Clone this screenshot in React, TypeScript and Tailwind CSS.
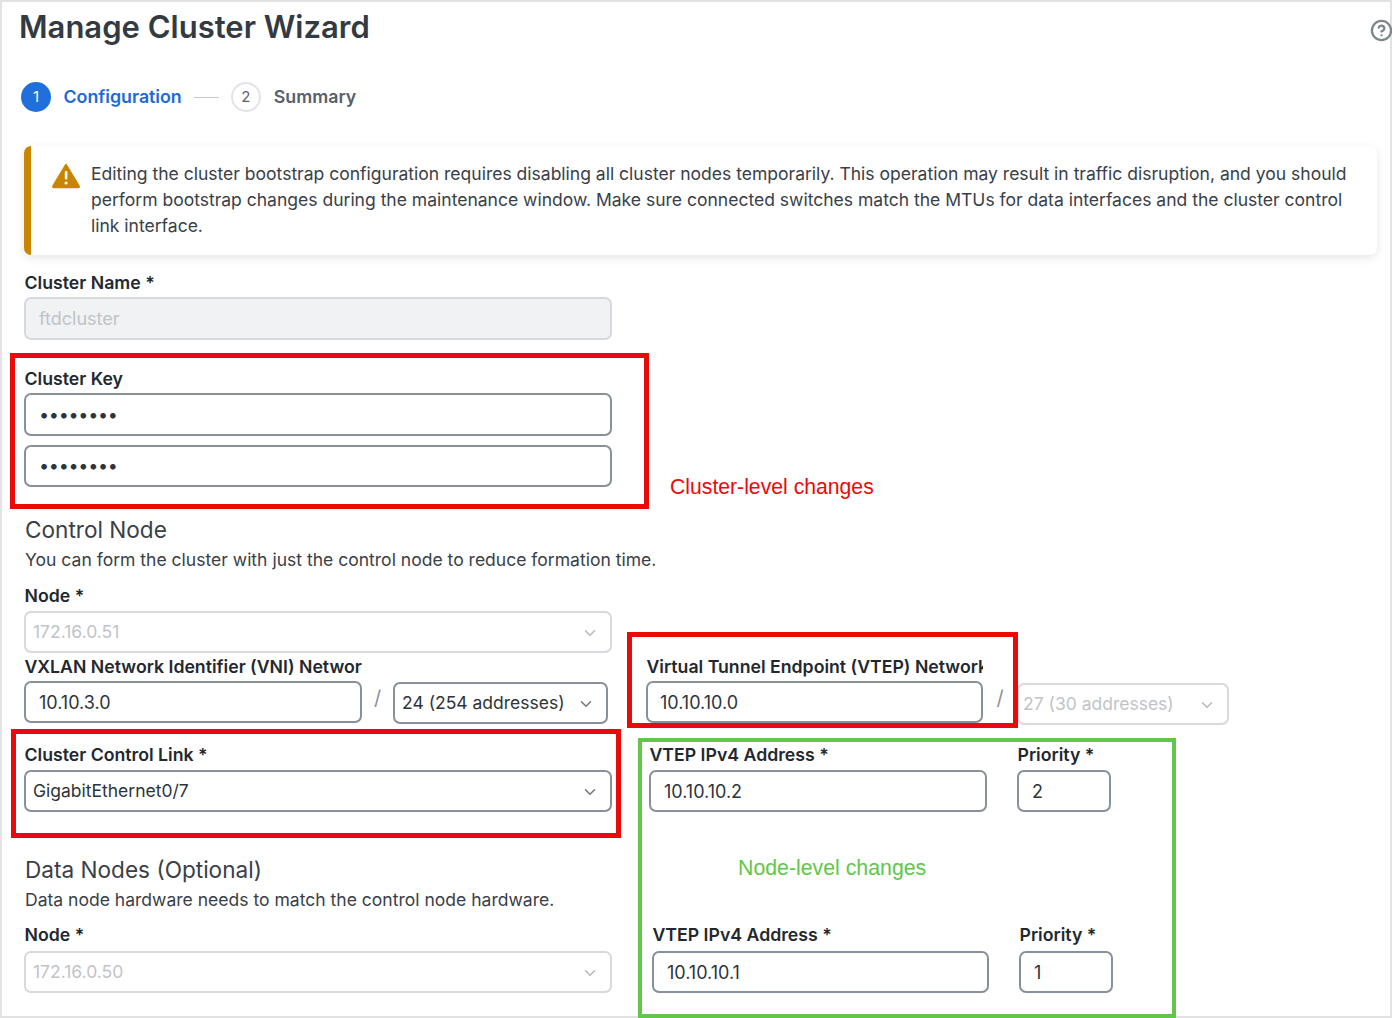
import { ChevronDown, CircleHelp } from "lucide-react";

const font = "font-['Inter',sans-serif]";

function Label({ text, width, className = "" }: { text: string; width?: string; className?: string }) {
  return (
    <div className={`h-[22px] leading-[22px] pl-[0.5px] text-[17.7px] font-semibold text-[#23282e] whitespace-nowrap overflow-hidden ${width ?? ""} ${className}`}>
      {text}
    </div>
  );
}

function Input({ value, tall, className = "" }: { value: string; tall?: boolean; className?: string }) {
  return (
    <div className={`${tall ? "h-[43px]" : "h-[42px]"} flex items-center pr-[13px] rounded-[7px] border-2 border-[#889099] bg-white text-[18px] text-[#2e343b] ${className}`}>
      {value}
    </div>
  );
}

function Select({ value, disabled, className = "" }: { value: string; disabled?: boolean; className?: string }) {
  return (
    <div
      className={`h-[42px] flex items-center justify-between pr-[11px] pt-[1px] rounded-[7px] border-2 bg-white text-[17.5px] ${
        disabled ? "border-[#d6d9dd] text-[#bfc4c9]" : "border-[#889099] text-[#2e343b]"
      } ${className}`}
    >
      <span>{value}</span>
      <ChevronDown size={18} className={disabled ? "text-[#b4bac0]" : "text-[#6f7780]"} />
    </div>
  );
}

function Slash({ className = "" }: { className?: string }) {
  return <div className={`text-[20px] text-[#8b939b] text-center leading-[30px] ${className}`}>/</div>;
}

export default function App() {
  return (
    <div className={`relative w-[1392px] h-[1018px] bg-white overflow-hidden ${font}`}>
      <div className="h-[1018px] border-2 border-[#e2e2e2] pl-[22px] pr-[13px]">
        <div className="h-[48px] flex items-center justify-between -ml-[5px] -mr-[13px]">
          <h1 className="text-[31px] font-semibold text-[#343a42] leading-none">Manage Cluster Wizard</h1>
          <CircleHelp size={23} strokeWidth={2.4} className="text-[#7d868e] mt-[8px] -mr-[3px]" />
        </div>

        <div className="mt-[32px] h-[30px] flex items-center -ml-[3px]">
          <div className="w-[30px] h-[30px] rounded-full bg-[#1f6fdc] text-white text-[15px] flex items-center justify-center">1</div>
          <span className="ml-[12.5px] pt-[1px] text-[17.8px] font-semibold text-[#1d69d8]">Configuration</span>
          <div className="ml-[12px] w-[25px] h-px bg-[#c6cace]" />
          <div className="ml-[12px] w-[30px] h-[30px] rounded-full border-2 border-[#e2e4e8] text-[#5c646d] text-[15px] flex items-center justify-center">2</div>
          <span className="ml-[13px] pt-[1px] text-[17.8px] font-semibold text-[#56606b]">Summary</span>
        </div>

        <div className="mt-[34px] h-[109px] flex rounded-[7px] bg-white border-l-[7px] border-[#c98500] shadow-[0_3px_10px_rgba(0,0,0,0.1)] pt-[15px] pl-[21px] pr-[20px]">
          <svg width="28" height="26" viewBox="0 0 28 26" className="mt-[2px] shrink-0">
            <path d="M14 1.5 L27 23 Q27.5 24.5 26 24.5 L2 24.5 Q.5 24.5 1 23 Z" fill="#c98500" stroke="#c98500" strokeWidth="1.5" strokeLinejoin="round" />
            <rect x="12.8" y="8" width="2.6" height="8.5" rx="1" fill="#fff" />
            <circle cx="14.1" cy="20" r="1.6" fill="#fff" />
          </svg>
          <p className="ml-[11px] text-[17.53px] leading-[26px] text-[#3a4048]">
            Editing the cluster bootstrap configuration requires disabling all cluster nodes temporarily. This operation may result in traffic disruption, and you should perform bootstrap changes during the maintenance window. Make sure connected switches match the MTUs for data interfaces and the cluster control link interface.
          </p>
        </div>

        <Label text="Cluster Name *" className="mt-[17px]" />
        <div className="mt-[3px] w-[588px] h-[43px] flex items-center px-[13px] rounded-[7px] border-2 border-[#d6d9dd] bg-[#f0f2f3] text-[18px] text-[#bfc4c9]">
          ftdcluster
        </div>

        <Label text="Cluster Key" className="mt-[28px]" />
        <Input value="••••••••" tall className="mt-[3px] w-[588px] pl-[13px] tracking-[-0.3px]" />
        <Input value="••••••••" className="mt-[9px] w-[588px] pl-[13px] tracking-[-0.3px] pb-[1px]" />

        <h2 className="mt-[30px] pl-[1px] h-[26px] leading-[26px] text-[22.6px] text-[#3a4048]">Control Node</h2>
        <p className="mt-[5px] pl-[1px] h-[24px] leading-[24px] text-[17.55px] text-[#3a4048]">You can form the cluster with just the control node to reduce formation time.</p>
        <Label text="Node *" className="mt-[13px]" />
        <Select value="172.16.0.51" disabled className="mt-[4px] w-[588px] pl-[7px]" />

        <div className="mt-[3px] flex">
          <div className="w-[338px]">
            <Label text="VXLAN Network Identifier (VNI) Network *" />
            <Input value="10.10.3.0" className="mt-[3px] pl-[13px]" />
          </div>
          <Slash className="w-[31px] mt-[27px]" />
          <Select value="24 (254 addresses)" className="w-[215px] mt-[26px] pl-[7px]" />
          <div className="ml-[38px] w-[337px]">
            <Label text="Virtual Tunnel Endpoint (VTEP) Network *" />
            <Input value="10.10.10.0" className="mt-[3px] pl-[12px]" />
          </div>
          <Slash className="w-[34px] mt-[27px]" />
          <Select value="27 (30 addresses)" disabled className="w-[212px] mt-[27px] pl-[4px]" />
        </div>

        <div className="mt-[19px] flex">
          <div className="w-[588px]">
            <Label text="Cluster Control Link *" />
            <Select value="GigabitEthernet0/7" className="mt-[4px] pl-[7px]" />
          </div>
          <div className="ml-[37px] w-[338px]">
            <Label text="VTEP IPv4 Address *" />
            <Input value="10.10.10.2" className="mt-[4px] pl-[13px]" />
          </div>
          <div className="ml-[30px] w-[94px]">
            <Label text="Priority *" />
            <Input value="2" className="mt-[4px] pl-[13px]" />
          </div>
        </div>

        <div className="mt-[45px] flex items-end">
          <div className="w-[588px]">
            <h2 className="h-[26px] pl-[1px] leading-[26px] text-[22.6px] text-[#3a4048]">Data Nodes (Optional)</h2>
            <p className="mt-[5px] pl-[1px] h-[24px] leading-[24px] text-[17.55px] text-[#3a4048]">Data node hardware needs to match the control node hardware.</p>
            <Label text="Node *" className="mt-[12px]" />
            <Select value="172.16.0.50" disabled className="mt-[5px] pl-[7px]" />
          </div>
          <div className="ml-[40px] w-[337px]">
            <Label text="VTEP IPv4 Address *" />
            <Input value="10.10.10.1" className="mt-[5px] pl-[13px]" />
          </div>
          <div className="ml-[30px] w-[94px]">
            <Label text="Priority *" />
            <Input value="1" className="mt-[5px] pl-[13px]" />
          </div>
        </div>
      </div>

      {/* annotations drawn over the screenshot */}
      <div className="absolute left-[10px] top-[353px] w-[639px] h-[156px] border-[5px] border-[#ea0a0a]" />
      <div className="absolute left-[627px] top-[632px] w-[391px] h-[96px] border-[5px] border-[#ea0a0a]" />
      <div className="absolute left-[11px] top-[729px] w-[610px] h-[109px] border-[5px] border-[#ea0a0a]" />
      <div className="absolute left-[638px] top-[738px] w-[538px] h-[280px] border-[4px] border-[#62c64a]" />
      <span className="absolute left-[670px] top-[474px] text-[21.2px] leading-[26px] text-[#ea0a0a] font-['Liberation_Sans',sans-serif]">Cluster-level changes</span>
      <span className="absolute left-[738px] top-[855px] text-[21.3px] leading-[26px] text-[#62c64a] font-['Liberation_Sans',sans-serif]">Node-level changes</span>
    </div>
  );
}
